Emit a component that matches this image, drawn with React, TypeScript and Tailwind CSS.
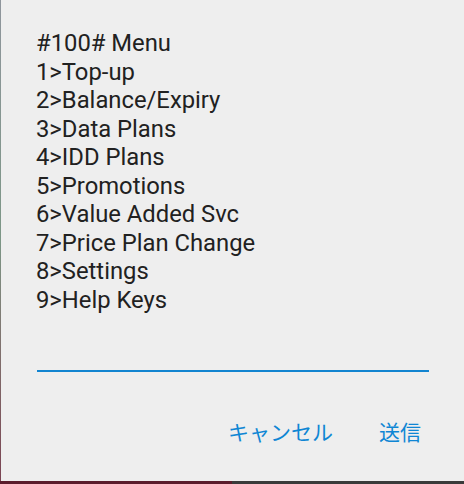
import React from 'react';

// USSD応答ダイアログ
const menuLines = [
  '#100# Menu',
  '1>Top-up',
  '2>Balance/Expiry',
  '3>Data Plans',
  '4>IDD Plans',
  '5>Promotions',
  '6>Value Added Svc',
  '7>Price Plan Change',
  '8>Settings',
  '9>Help Keys',
];

const App: React.FC = () => {
  return (
    <div className="flex flex-col w-[464px] h-[484px] bg-[#2e2e2e] overflow-hidden">
      <div className="flex flex-1 min-h-0">
        <div className="w-[1px] bg-gradient-to-b from-[#8f959c] via-[#7c9686] to-[#7a4352]" />
        <div
          className="flex-1 flex flex-col bg-[#eeeeee] text-[#212121]"
          style={{ fontFamily: 'Roboto, "Noto Sans CJK JP", sans-serif' }}
        >
          <div className="pl-[36px] pr-[35px] pt-[29px]">
            <div className="-ml-[1px] text-[23.8px] leading-[28.5px]">
              {menuLines.map((line) => (
                <div key={line}>{line}</div>
              ))}
            </div>
            <div className="mt-[56px] h-[2px] bg-[#1284d0]" />
          </div>
          <div className="flex justify-end gap-[46px] pr-[43px] mt-[47px] text-[21px] leading-[28px] text-[#0f86d4]">
            <button type="button">キャンセル</button>
            <button type="button">送信</button>
          </div>
        </div>
      </div>
      <div className="flex h-[3px]">
        <div className="w-[232px] bg-[#5b1c2c]" />
        <div className="flex-1 bg-[#3a3a3a]" />
      </div>
    </div>
  );
};

export default App;
